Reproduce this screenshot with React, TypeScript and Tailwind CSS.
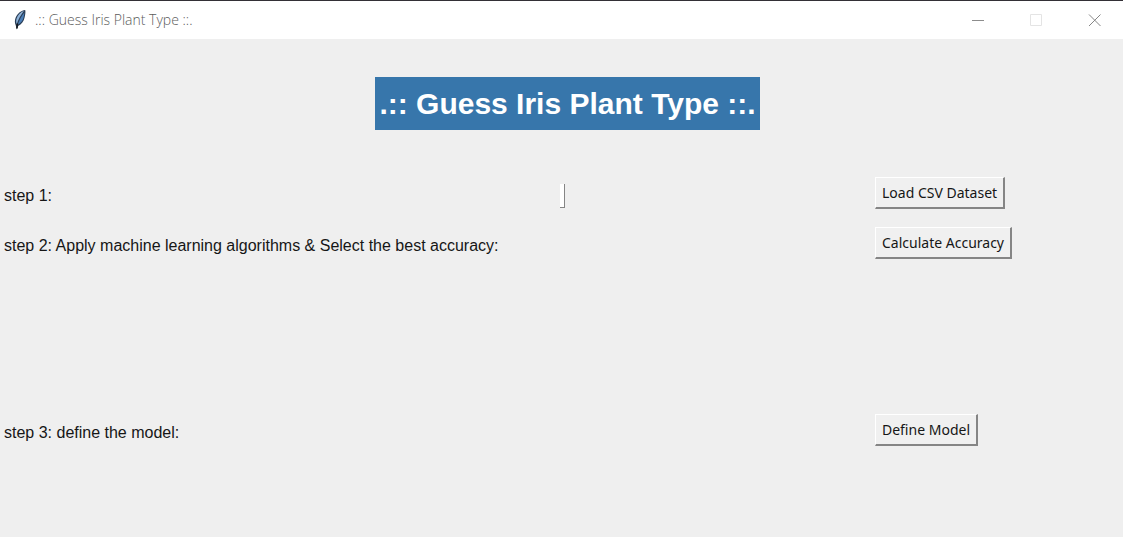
import type { ReactNode } from 'react';

function FeatherIcon() {
  return (
    <svg width="16" height="22" viewBox="0 0 16 22" aria-hidden="true">
      <path d="M13.2 1C9.5 1.2 5.4 4.4 3.6 8.8C2.6 11.4 2.6 14 3.8 16.4L4.8 20.5L6.2 17C9.6 15.4 11.8 12.4 12.6 8.6C13.1 6 13.8 3.4 13.2 1Z" fill="#2a3d55" />
      <path d="M12 1.8C8.6 3 5.8 6 4.6 9.6C4 11.6 4 13.4 4.7 15.2C6.2 10.4 8.8 6.2 12 1.8Z" fill="#8fb3d9" />
      <path d="M12.4 3.4C9.4 7 7.2 11.2 5.8 15.6C9 14 11 11.4 11.6 8.2Z" fill="#4a7eb8" />
      <path d="M5.4 14.5L4.9 19.5" fill="none" stroke="#15191f" strokeWidth="1.6" />
    </svg>
  );
}

function TitleBar() {
  return (
    <header className="flex h-[39px] items-center justify-between border-t border-[#333036] bg-white">
      <div className="flex items-center gap-[7px] pl-3">
        <FeatherIcon />
        <span className="font-['Open_Sans',sans-serif] text-sm font-light text-[#5c5c5c]">.:: Guess Iris Plant Type ::.</span>
      </div>
      <div className="flex">
        <button type="button" aria-label="Minimize" className="flex h-9 w-[58px] items-center justify-center">
          <svg width="13" height="13" viewBox="0 0 13 13"><path d="M0 6.5H12" stroke="#8c8c8c" /></svg>
        </button>
        <button type="button" aria-label="Maximize" disabled className="flex h-9 w-[58px] items-center justify-center">
          <svg width="13" height="13" viewBox="0 0 13 13"><path d="M0.5 0.5H11.5V11.5H0.5Z" fill="none" stroke="#e4e4e4" /></svg>
        </button>
        <button type="button" aria-label="Close" className="flex h-9 w-[58px] items-center justify-center">
          <svg width="13" height="13" viewBox="0 0 13 13"><path d="M1 0.5L12.5 12M12.5 0.5L1 12" stroke="#858585" /></svg>
        </button>
      </div>
    </header>
  );
}

type StepProps = { label: string; action: string; children?: ReactNode };

function Step({ label, action, children }: StepProps) {
  return (
    <section className="grid h-[50px] grid-cols-[560fr_315fr_248fr] items-center">
      <p className="pt-1.5 pl-1 font-['Liberation_Sans',sans-serif] text-base leading-6 whitespace-nowrap">{label}</p>
      <div className="pt-1.5">{children}</div>
      <div>
        <button
          type="button"
          className="h-8 border-t border-r-2 border-b-2 border-l border-t-white border-r-[#858585] border-b-[#858585] border-l-white bg-[#f0f0f0] px-1.5 font-['Noto_Sans',sans-serif] text-sm whitespace-nowrap"
        >
          {action}
        </button>
      </div>
    </section>
  );
}

export default function App() {
  return (
    <div className="flex min-h-screen flex-col bg-[#efefef] text-[#161616]">
      <TitleBar />
      <main>
        <div className="flex justify-center pt-[38px] pb-[38px] pl-3">
          <h1 className="bg-[#3776ab] px-1 py-1 font-['Liberation_Sans',sans-serif] text-3xl leading-[45px] font-bold text-white">
            .:: Guess Iris Plant Type ::.
          </h1>
        </div>
        <Step label="step 1:" action="Load CSV Dataset">
          <div className="h-6 w-[5px] border-r border-b border-[#858585] bg-white" />
        </Step>
        <Step label="step 2: Apply machine learning algorithms & Select the best accuracy:" action="Calculate Accuracy" />
        <div className="pt-[137px]">
          <Step label="step 3: define the model:" action="Define Model" />
        </div>
      </main>
    </div>
  );
}
